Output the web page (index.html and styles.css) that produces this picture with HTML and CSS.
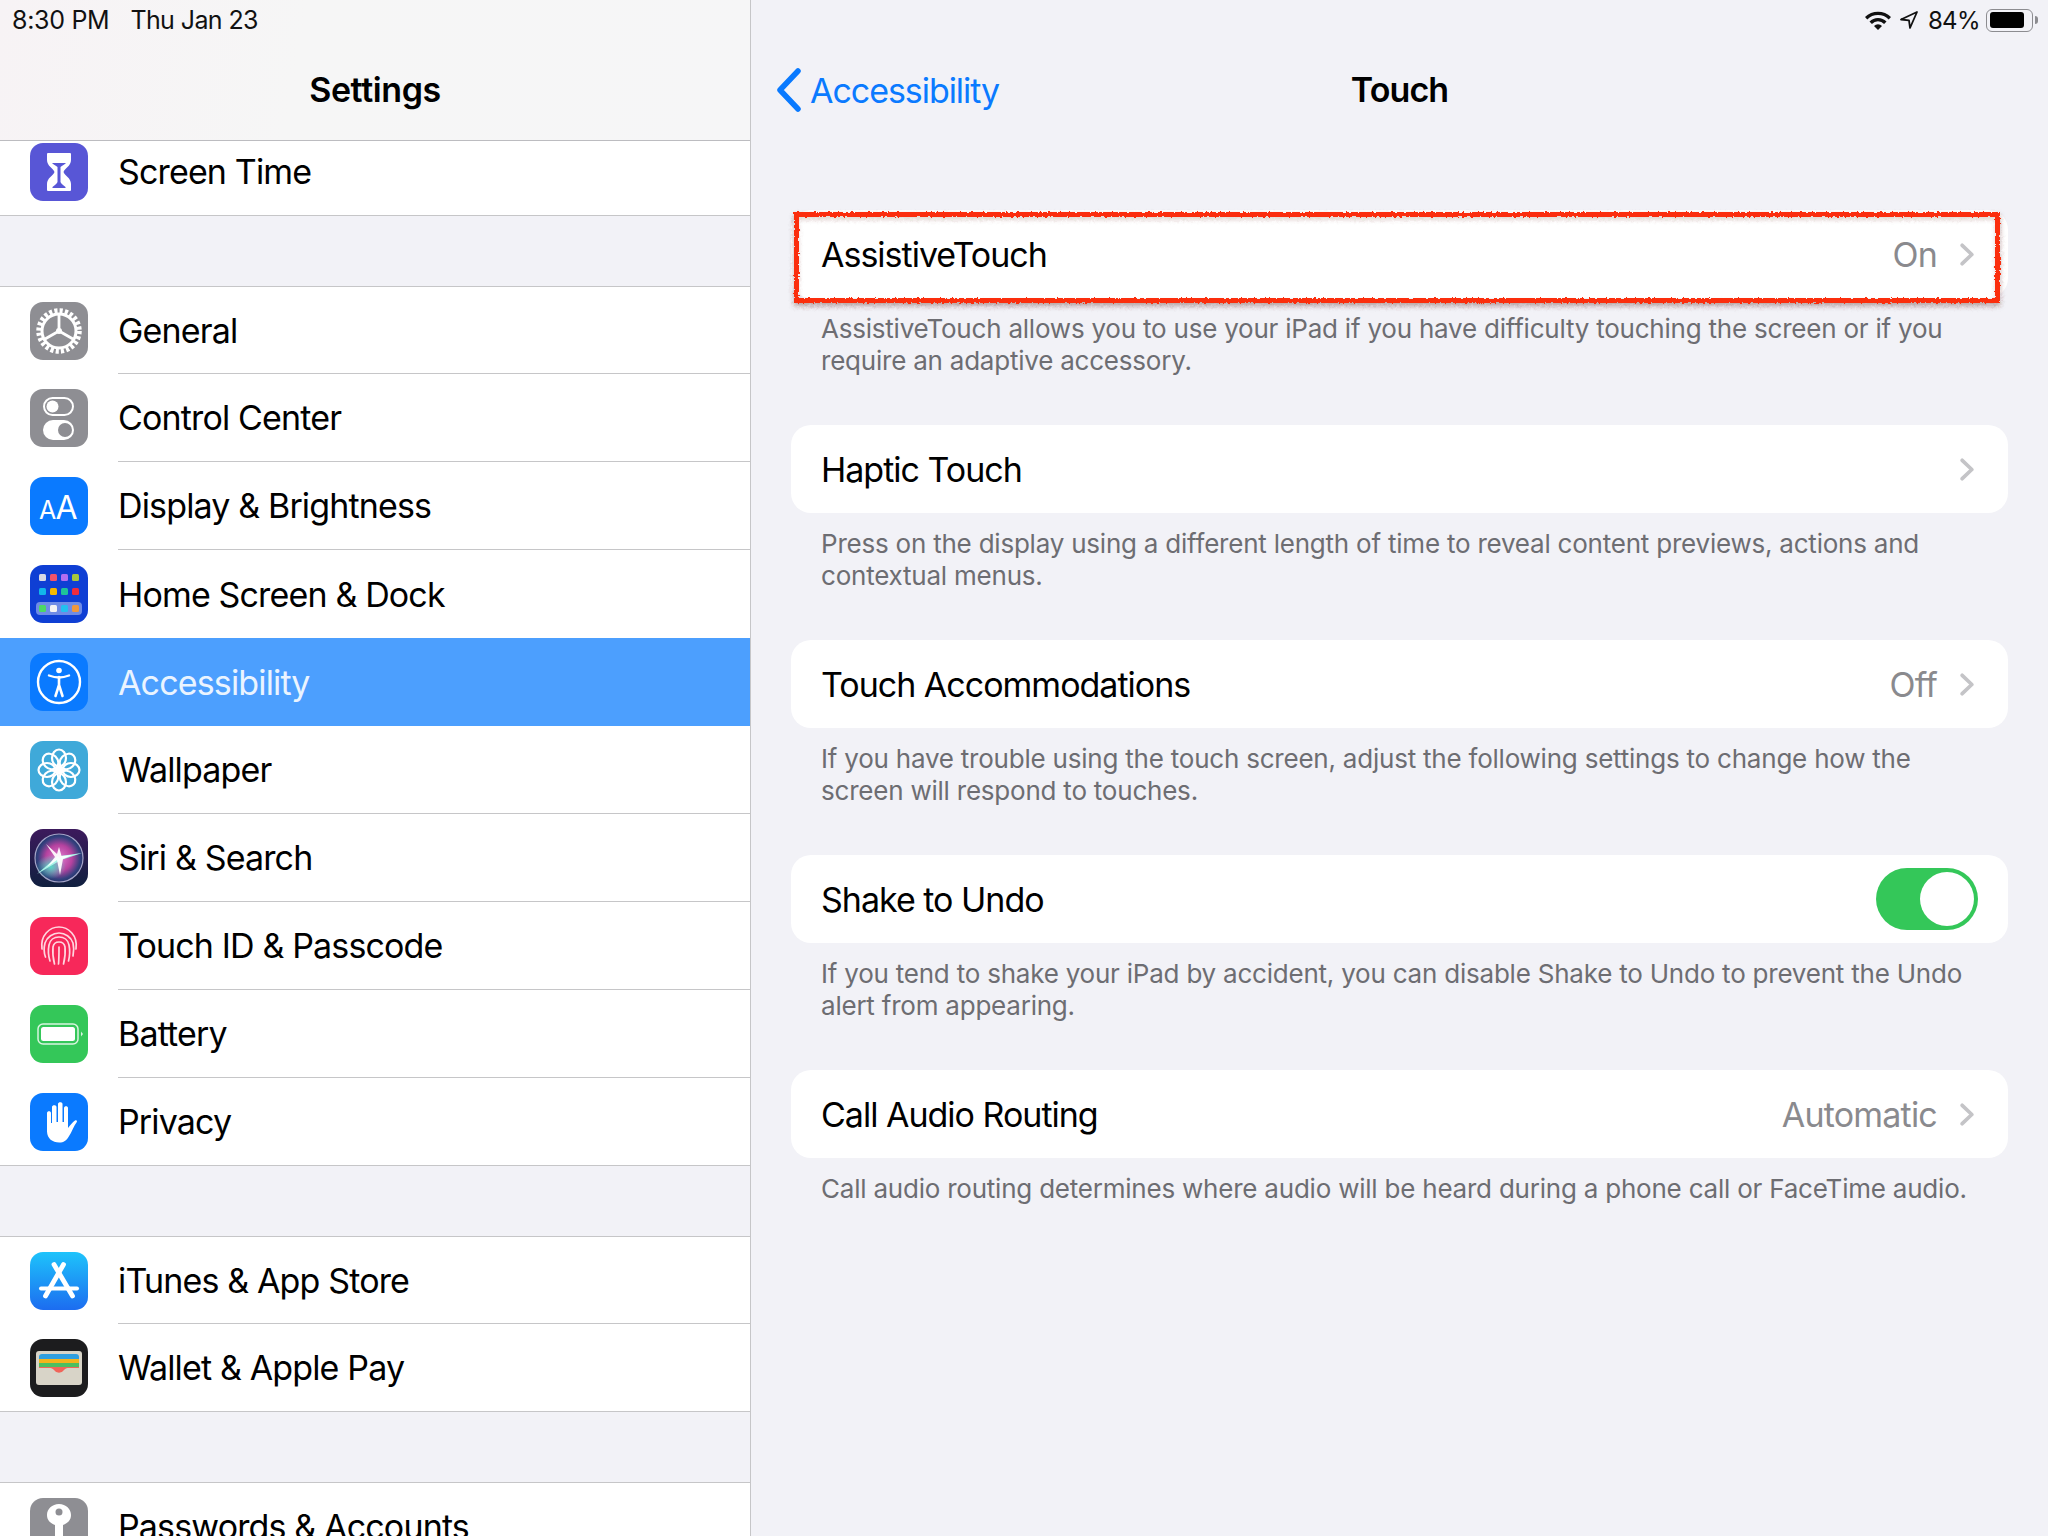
FILE: index.html
```html
<!DOCTYPE html>
<html lang="en">
<head>
<meta charset="utf-8">
<title>Touch - Settings</title>
<link rel="stylesheet" href="styles.css">
</head>
<body>
<svg class="defs" aria-hidden="true"><filter id="rough" x="-2%" y="-20%" width="104%" height="140%"><feTurbulence type="fractalNoise" baseFrequency="0.35" numOctaves="2" seed="4"/><feDisplacementMap in="SourceGraphic" scale="3.500" xChannelSelector="R" yChannelSelector="G"/></filter></svg>
<div class="ipad">
  <aside class="sidebar">
    <header class="side-head">
      <div class="status status-left"><span>8:30 PM</span><span class="st-date">Thu Jan 23</span></div>
      <h1 class="nav-title">Settings</h1>
    </header>
    <div class="side-scroll">
      <section class="group group-first">
        <div class="row">
          <svg class="icon" viewBox="0 0 58 58"><rect width="58" height="58" rx="13" fill="#5856d6"/><path fill="#fff" d="M18 10h22a1 1 0 0 1 1 1v6c0 6-6 8-7.500 12 1.500 4 7.500 6 7.500 12v6a1 1 0 0 1-1 1H18a1 1 0 0 1-1-1v-6c0-6 6-8 7.500-12C23 25 17 23 17 17v-6a1 1 0 0 1 1-1z"/><path fill="#5856d6" d="M22 20h14c-1 1.500-4 2.500-5.500 4v15c.5 2 3 3 5 5v1h-13v-1c2-2 4.500-3 5-5V24c-1.500-1.500-4.500-2.500-5.500-4z"/></svg>
          <span class="label line-none">Screen Time</span>
        </div>
      </section>
      <section class="group">
        <div class="row">
          <svg class="icon" viewBox="0 0 58 58"><rect width="58" height="58" rx="13" fill="#8e8e93"/><circle cx="29" cy="29" r="20" fill="none" stroke="#fff" stroke-width="5.500" stroke-dasharray="3.100 2.136"/><circle cx="29" cy="29" r="17" fill="none" stroke="#fff" stroke-width="3"/><path d="M29 29V13M29 29L15 37M29 29l14 8" stroke="#fff" stroke-width="2.800" fill="none"/><circle cx="29" cy="29" r="3" fill="#fff"/></svg>
          <span class="label">General</span>
        </div>
        <div class="row">
          <svg class="icon" viewBox="0 0 58 58"><rect width="58" height="58" rx="13" fill="#8e8e93"/><rect x="14" y="9" width="29" height="17" rx="8.500" fill="none" stroke="#fff" stroke-width="2"/><circle cx="22.500" cy="17.500" r="6" fill="#fff"/><rect x="13" y="31" width="31" height="20" rx="10" fill="#fff"/><circle cx="35" cy="41" r="7" fill="#8e8e93"/></svg>
          <span class="label">Control Center</span>
        </div>
        <div class="row">
          <svg class="icon" viewBox="0 0 58 58"><rect width="58" height="58" rx="13" fill="#0a7aff"/><text class="aa" x="9" y="42" font-size="25">A</text><text class="aa" x="25.500" y="42" font-size="32">A</text></svg>
          <span class="label">Display &amp; Brightness</span>
        </div>
        <div class="row">
          <svg class="icon" viewBox="0 0 58 58"><rect width="58" height="58" rx="13" fill="#0f3fd4"/><rect x="9" y="9" width="7" height="7" rx="1.500" fill="#d9d9e4"/><rect x="20" y="9" width="7" height="7" rx="1.500" fill="#f2536a"/><rect x="31" y="9" width="7" height="7" rx="1.500" fill="#b46ef0"/><rect x="42" y="9" width="7" height="7" rx="1.500" fill="#a8c83c"/><rect x="9" y="23" width="7" height="7" rx="1.500" fill="#12b5ea"/><rect x="20" y="23" width="7" height="7" rx="1.500" fill="#f5b800"/><rect x="31" y="23" width="7" height="7" rx="1.500" fill="#1fc49a"/><rect x="42" y="23" width="7" height="7" rx="1.500" fill="#f02c3c"/><rect x="6" y="37" width="46" height="13" rx="4" fill="#6f8ce6"/><rect x="9" y="40" width="7" height="7" rx="1.500" fill="#4cd964"/><rect x="20" y="40" width="7" height="7" rx="1.500" fill="#f4f4f4"/><rect x="31" y="40" width="7" height="7" rx="1.500" fill="#22c0f0"/><rect x="42" y="40" width="7" height="7" rx="1.500" fill="#f0983c"/></svg>
          <span class="label line-none">Home Screen &amp; Dock</span>
        </div>
        <div class="row row-selected">
          <svg class="icon" viewBox="0 0 58 58"><rect width="58" height="58" rx="13" fill="#0a7aff"/><circle cx="29" cy="29" r="21" fill="none" stroke="#fff" stroke-width="2.400"/><circle cx="29" cy="17.500" r="2.800" fill="#fff"/><path d="M19 22.500c4 1.500 7 2 10 2s6-.5 10-2" fill="none" stroke="#fff" stroke-width="2.400" stroke-linecap="round"/><path d="M29 24v9M29 32l-3.500 11M29 32l3.500 11" fill="none" stroke="#fff" stroke-width="2.600" stroke-linecap="round"/></svg>
          <span class="label line-none">Accessibility</span>
        </div>
        <div class="row">
          <svg class="icon" viewBox="0 0 58 58"><rect width="58" height="58" rx="13" fill="#3fa9d9"/><g fill="none" stroke="#fff" stroke-width="2.200"><ellipse cx="29" cy="17" rx="7" ry="8.500"/><ellipse cx="29" cy="41" rx="7" ry="8.500"/><ellipse cx="17" cy="29" rx="8.500" ry="7"/><ellipse cx="41" cy="29" rx="8.500" ry="7"/><ellipse cx="29" cy="17" rx="7" ry="8.500" transform="rotate(45 29 29)"/><ellipse cx="29" cy="41" rx="7" ry="8.500" transform="rotate(45 29 29)"/><ellipse cx="17" cy="29" rx="8.500" ry="7" transform="rotate(45 29 29)"/><ellipse cx="41" cy="29" rx="8.500" ry="7" transform="rotate(45 29 29)"/></g><circle cx="29" cy="29" r="3.500" fill="#fff"/></svg>
          <span class="label">Wallpaper</span>
        </div>
        <div class="row">
          <svg class="icon" viewBox="0 0 58 58"><defs><linearGradient id="siriBg" x1="0" y1="0" x2="0" y2="1"><stop offset="0" stop-color="#3c1a5c"/><stop offset="1" stop-color="#10203f"/></linearGradient><radialGradient id="siriOrb" cx=".5" cy=".5" r=".55"><stop offset="0" stop-color="#e07ccf"/><stop offset=".5" stop-color="#b5429f"/><stop offset=".8" stop-color="#33407e"/><stop offset="1" stop-color="#1d2f5e"/></radialGradient><radialGradient id="siriTeal" cx=".5" cy=".5" r=".5"><stop offset="0" stop-color="#4fe0c8" stop-opacity=".95"/><stop offset="1" stop-color="#4fe0c8" stop-opacity="0"/></radialGradient></defs><rect width="58" height="58" rx="13" fill="url(#siriBg)"/><circle cx="29" cy="29" r="24" fill="url(#siriOrb)" stroke="#a4a4c8" stroke-width="1.200"/><ellipse cx="21" cy="38" rx="15" ry="12" fill="url(#siriTeal)"/><path fill="#a8f4e8" d="M28 27L7 45l24-14zM30 27l22-3-21 7z"/><path fill="#fff" opacity=".92" d="M29 18l2.500 9 11-1-9.500 4-3 16-3-15-10 7 8-10-9-13 11 10z"/></svg>
          <span class="label">Siri &amp; Search</span>
        </div>
        <div class="row">
          <svg class="icon" viewBox="0 0 58 58"><rect width="58" height="58" rx="13" fill="#f7285a"/><g fill="none" stroke="#ffd6df" stroke-width="1.700" stroke-linecap="round"><path d="M12 32c-2-14 8-22 17-22s19 8 17 22"/><path d="M15.500 40c-2-5-1.500-10-.5-14 2-6 8-10 14-10s12 4 14 10c1 4 1 8 0 13"/><path d="M20 44c-2-6-2-11-1-16 1-5 5-8 10-8s9 3 10 8c1 5 1 10-.5 16"/><path d="M24.500 47c-1.500-6-2-12-1.500-17 .5-3 3-5 6-5s5.500 2 6 5c.5 5 0 11-1.500 17"/><path d="M29 30c0 7 0 12-.5 17"/></g></svg>
          <span class="label">Touch ID &amp; Passcode</span>
        </div>
        <div class="row">
          <svg class="icon" viewBox="0 0 58 58"><rect width="58" height="58" rx="13" fill="#34c759"/><rect x="8" y="19" width="40" height="20" rx="5" fill="none" stroke="#d8f5df" stroke-width="1.500"/><rect x="11" y="22" width="34" height="14" rx="2.500" fill="#fff"/><path d="M51 26.500l2 2.500-2 2.500z" fill="#d8f5df"/></svg>
          <span class="label">Battery</span>
        </div>
        <div class="row">
          <svg class="icon" viewBox="0 0 58 58"><rect width="58" height="58" rx="13" fill="#0a7aff"/><path fill="#fff" d="M17 20c0-2.500 4-2.500 4 0v10h1V14c0-2.500 4.500-2.500 4.500 0v15H28V11c0-2.500 4.500-2.500 4.500 0v18H34V15c0-2.500 4-2.500 4 0v20c2-2.500 4.500-6 7-7.500 1.500-.8 2.500.3 1.800 1.500-3 4-5 10-8 14.500-2.500 4-5 6-9.500 6-7 0-12-4-12.300-11z"/></svg>
          <span class="label line-none">Privacy</span>
        </div>
      </section>
      <section class="group">
        <div class="row">
          <svg class="icon" viewBox="0 0 58 58"><defs><linearGradient id="storeBg" x1="0" y1="0" x2="0" y2="1"><stop offset="0" stop-color="#1ec3fb"/><stop offset="1" stop-color="#1c6cf0"/></linearGradient></defs><rect width="58" height="58" rx="13" fill="url(#storeBg)"/><g stroke="#fff" stroke-linecap="round" fill="none"><path stroke-width="4.800" d="M33.500 12.500L15.500 44"/><path stroke-width="4.800" d="M24 12.500L42.500 44"/><path stroke-width="4" d="M11 36.500h36"/></g></svg>
          <span class="label">iTunes &amp; App Store</span>
        </div>
        <div class="row">
          <svg class="icon" viewBox="0 0 58 58"><rect width="58" height="58" rx="13" fill="#1c1c1e"/><rect x="6" y="12" width="46" height="34" rx="3" fill="#d8d4c8"/><path fill="#2f9fe0" d="M9 20v-2a3 3 0 0 1 3-3h34a3 3 0 0 1 3 3v2z"/><path fill="#f4b41c" d="M9 20h40v4H9z"/><path fill="#4cbf60" d="M9 24h40v4H9z"/><path fill="#f0655a" d="M9 28h40v1h-10c-2 0-3 0-4.500 1.500l-2 2c-1.700 1.500-5.300 1.500-7 0l-2-2C22 29 21 29 19 29H9z"/></svg>
          <span class="label line-none">Wallet &amp; Apple Pay</span>
        </div>
      </section>
      <section class="group">
        <div class="row">
          <svg class="icon" viewBox="0 0 58 58"><rect width="58" height="58" rx="13" fill="#8e8e93"/><path fill="#fff" d="M29 6c7 0 12 5 12 11 0 5-3 8-8 10v23l-4 4-4-4v-4l3-3-3-3v-13c-5-2-8-5-8-10 0-6 5-11 12-11z"/><circle cx="29" cy="14" r="3.500" fill="#8e8e93"/></svg>
          <span class="label line-none">Passwords &amp; Accounts</span>
        </div>
      </section>
    </div>
  </aside>

  <main class="detail">
    <header class="detail-head">
      <div class="status status-right">
        <svg class="st-wifi" viewBox="0 0 28 20"><path d="M1 7a18.500 18.500 0 0 1 26 0l-2.300 2.400a15 15 0 0 0-21.400 0z"/><path d="M5.500 11.500a12 12 0 0 1 17 0l-2.400 2.400a8.600 8.600 0 0 0-12.200 0z"/><path d="M10 16a5.700 5.700 0 0 1 8 0l-4 4z"/></svg>
        <svg class="st-loc" viewBox="0 0 20 20"><path d="M18 2L2 9.500l8 .8 1 7.700z" fill="none" stroke="#111" stroke-width="1.800" stroke-linejoin="round"/></svg>
        <span class="st-pct">84%</span>
        <span class="st-batt"><span class="st-batt-fill"></span></span>
        <span class="st-nub"></span>
      </div>
      <div class="nav-bar">
        <a class="back"><svg class="back-chev" viewBox="0 0 26 44"><path d="M22 3L4 22l18 19" fill="none" stroke="#0a7aff" stroke-width="5.500" stroke-linecap="round" stroke-linejoin="round"/></svg><span>Accessibility</span></a>
        <h2 class="nav-title nav-title-detail">Touch</h2>
        <span></span>
      </div>
    </header>

    <div class="settings">
      <section class="setting">
        <div class="card">
          <span class="card-title">AssistiveTouch</span>
          <span class="value">On</span>
          <svg class="chev" viewBox="0 0 16 26"><path d="M2.500 2.500L13.500 13 2.500 23.500"/></svg>
          <span class="flag"></span>
        </div>
        <p class="note">AssistiveTouch allows you to use your iPad if you have difficulty touching the screen or if you require an adaptive accessory.</p>
      </section>
      <section class="setting">
        <div class="card">
          <span class="card-title">Haptic Touch</span>
          <svg class="chev" viewBox="0 0 16 26"><path d="M2.500 2.500L13.500 13 2.500 23.500"/></svg>
        </div>
        <p class="note">Press on the display using a different length of time to reveal content previews, actions and contextual menus.</p>
      </section>
      <section class="setting">
        <div class="card">
          <span class="card-title">Touch Accommodations</span>
          <span class="value">Off</span>
          <svg class="chev" viewBox="0 0 16 26"><path d="M2.500 2.500L13.500 13 2.500 23.500"/></svg>
        </div>
        <p class="note">If you have trouble using the touch screen, adjust the following settings to change how the screen will respond to touches.</p>
      </section>
      <section class="setting">
        <div class="card card-toggle">
          <span class="card-title">Shake to Undo</span>
          <span class="toggle"><span class="knob"></span></span>
        </div>
        <p class="note">If you tend to shake your iPad by accident, you can disable Shake to Undo to prevent the Undo alert from appearing.</p>
      </section>
      <section class="setting">
        <div class="card">
          <span class="card-title">Call Audio Routing</span>
          <span class="value">Automatic</span>
          <svg class="chev" viewBox="0 0 16 26"><path d="M2.500 2.500L13.500 13 2.500 23.500"/></svg>
        </div>
        <p class="note">Call audio routing determines where audio will be heard during a phone call or FaceTime audio.</p>
      </section>
    </div>
  </main>
</div>
</body>
</html>
```
FILE: styles.css
```css
* { box-sizing: border-box; }
html, body { margin: 0; padding: 0; }
body {
  width: 2048px;
  height: 1536px;
  overflow: hidden;
  background: #f2f2f7;
  color: #000;
  font-family: "Inter", "Liberation Sans", sans-serif;
}
.defs { display: block; width: 0; height: 0; }
.ipad { display: flex; width: 2048px; height: 1536px; }

/* sidebar */
.sidebar {
  width: 751px;
  height: 1536px;
  flex: none;
  border-right: 1px solid #c6c6c8;
  background: #f2f2f7;
  overflow: hidden;
  display: flex;
  flex-direction: column;
}
.side-head {
  position: relative;
  z-index: 1;
  height: 141px;
  flex: none;
  border-bottom: 1px solid #bcbcc0;
  background: linear-gradient(100deg, #f7f3f5 0%, #f6f6f6 40%, #f6f6f7 100%);
}
.status {
  display: flex;
  align-items: center;
  height: 40px;
  font-size: 25px;
  letter-spacing: -0.3px;
  color: #111;
}
.status-left { padding-left: 12px; gap: 21px; }
.st-date { letter-spacing: -0.6px; }
.status-right { justify-content: flex-end; padding-right: 10px; }
.nav-title {
  margin: 0;
  height: 100px;
  line-height: 100px;
  font-size: 34px;
  font-weight: 600;
  letter-spacing: -0.4px;
  text-align: center;
}
.nav-title-detail { letter-spacing: -0.9px; }

.side-scroll { flex: none; margin-top: -13px; }
.group {
  margin-top: 70px;
  background: #fff;
  border-top: 1px solid #c6c6c8;
  border-bottom: 1px solid #c6c6c8;
}
.group-first { margin-top: 0; border-top: 0; }
.row {
  display: flex;
  align-items: center;
  height: 88px;
  padding-left: 30px;
}
.row:first-child, .row:last-child { height: 87px; }
.icon { flex: none; width: 58px; height: 58px; margin-right: 30px; }
.aa { fill: #fff; font-family: "Inter", sans-serif; font-weight: 400; }
.label {
  flex: 1;
  display: flex;
  align-items: center;
  height: 100%;
  font-size: 34px;
  letter-spacing: -0.85px;
  border-bottom: 1px solid #c6c6c8;
}
.line-none { border-bottom: 0; }
.row-selected { background: #4c9ffe; color: #eaf4ff; }

/* detail */
.detail { flex: 1; min-width: 0; display: flex; flex-direction: column; }
.detail-head { height: 140px; flex: none; }
.nav-bar {
  display: grid;
  grid-template-columns: 1fr auto 1fr;
  align-items: center;
  height: 100px;
  padding: 0 25px;
}
.back { display: flex; align-items: center; gap: 8px; color: #0a7aff; font-size: 34px; letter-spacing: -1.05px; }
.back-chev { width: 26px; height: 44px; flex: none; }
.st-wifi { width: 28px; height: 20px; fill: #111; margin-right: 7px; }
.st-loc { width: 20px; height: 20px; margin-right: 9px; }
.st-pct { font-size: 24px; letter-spacing: -0.6px; }
.st-batt {
  width: 47px;
  height: 23px;
  margin-left: 6px;
  padding: 2.500px;
  border: 1.500px solid #8c8c90;
  border-radius: 6px;
  display: flex;
}
.st-batt-fill { width: 34px; background: #000; border-radius: 3px; }
.st-nub { width: 3px; height: 8px; margin-left: 2px; background: #8c8c90; border-radius: 0 3px 3px 0; }

.settings { padding: 70px 40px 0; display: flex; flex-direction: column; gap: 48px; }
.setting { display: flex; flex-direction: column; }
.card {
  position: relative;
  display: flex;
  align-items: center;
  height: 88px;
  padding: 0 34px 0 30px;
  background: #fff;
  border-radius: 20px;
  font-size: 34px;
  letter-spacing: -1px;
}
.card-title { flex: 1; }
.value { color: #8a8a8e; margin-right: 23px; letter-spacing: -0.8px; }
.chev { flex: none; width: 14px; height: 23px; }
.chev path { fill: none; stroke: #c4c4c7; stroke-width: 4.200; stroke-linecap: round; stroke-linejoin: round; }
.card-toggle { padding-right: 30px; }
.toggle {
  flex: none;
  display: flex;
  justify-content: flex-end;
  align-items: center;
  width: 102px;
  height: 62px;
  padding-right: 4px;
  background: #34c759;
  border-radius: 31px;
}
.knob { width: 54px; height: 54px; background: #fff; border-radius: 50%; }
.flag {
  position: absolute;
  left: 3px;
  right: 8px;
  top: 2px;
  bottom: -5px;
  border: 5px solid #fb2f0b;
  box-shadow: 0 3px 5px rgba(90, 40, 30, .4), inset 0 3px 4px rgba(90, 40, 30, .18);
  filter: url(#rough);
}
.note {
  margin: 0;
  padding: 15px 30px 0;
  font-size: 26px;
  line-height: 32px;
  letter-spacing: -0.22px;
  color: #6d6d72;
}
```
